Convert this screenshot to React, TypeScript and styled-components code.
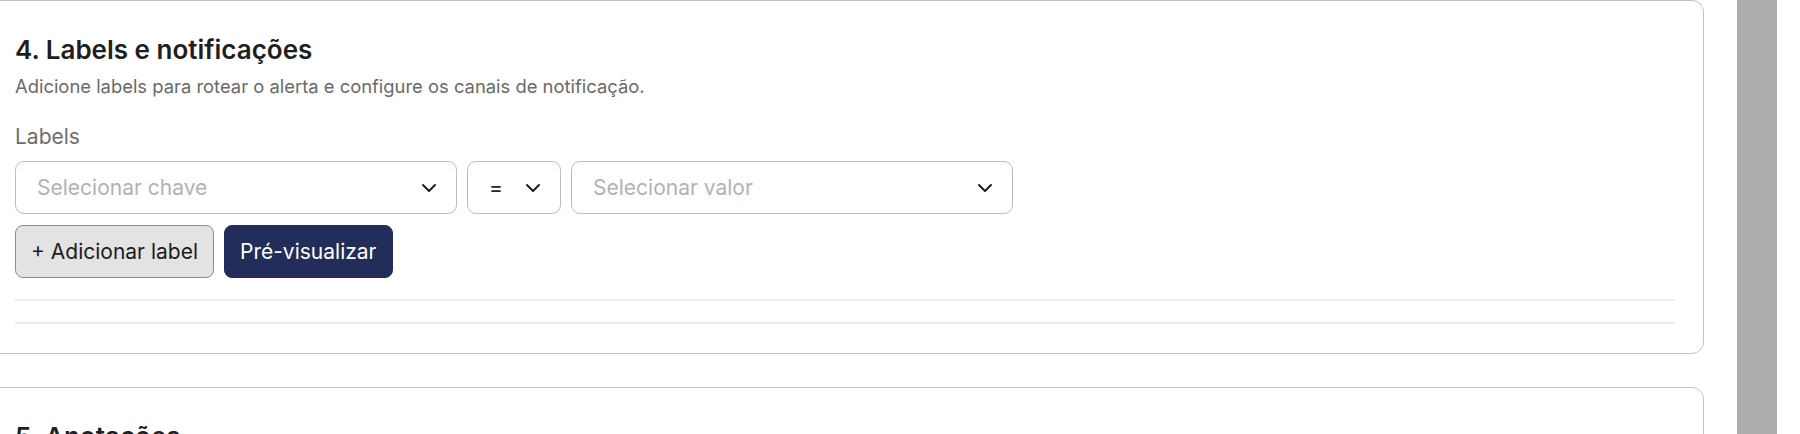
import React from 'react';
import styled, { createGlobalStyle } from 'styled-components';
import { ChevronDown } from 'lucide-react';

const GlobalStyle = createGlobalStyle`
  html, body {
    margin: 0;
    padding: 0;
    height: 434px;
    overflow: hidden;
    background: #ffffff;
    font-family: Inter, 'Noto Sans', sans-serif;
  }
`;

interface SelectProps {
  value: string;
  placeholder?: boolean;
  width: number;
}

const SelectBox = ({ value, placeholder, width }: SelectProps) => (
  <Select width={width}>
    <SelectText placeholder={placeholder}>{value}</SelectText>
    <ChevronDown size={24} strokeWidth={2} color="#1f1f1f" />
  </Select>
);

const App = () => {
  return (
    <>
      <GlobalStyle />
      <Page>
        <Main>
          <Card>
            <Title>4. Labels e notificações</Title>
            <Subtitle>
              Adicione labels para rotear o alerta e configure os canais de notificação.
            </Subtitle>
            <FieldLabel>Labels</FieldLabel>
            <SelectRow>
              <SelectBox value="Selecionar chave" placeholder width={442} />
              <SelectBox value="=" width={94} />
              <SelectBox value="Selecionar valor" placeholder width={442} />
            </SelectRow>
            <ButtonRow>
              <Button>+ Adicionar label</Button>
              <Button primary>Pré-visualizar</Button>
            </ButtonRow>
            <Divider />
            <Divider />
          </Card>
          <Card>
            <Title>5. Anotações</Title>
            <Subtitle>Adicione anotações para descrever o alerta.</Subtitle>
          </Card>
        </Main>
        <Rail />
      </Page>
    </>
  );
};

export default App;

const Page = styled.div`
  display: flex;
  flex-direction: row;
  align-items: flex-start;
  height: 434px;
  padding-right: 23px;
`;

const Main = styled.div`
  flex: 1;
  display: flex;
  flex-direction: column;
  gap: 33px;
  margin-left: -14px;
  min-width: 0;
`;

const Rail = styled.div`
  align-self: stretch;
  width: 40px;
  margin-left: 33px;
  background-color: #adadad;
`;

const Card = styled.section`
  border: 1px solid #c2c2c2;
  border-radius: 12px;
  padding: 33px 28px 29px;
  background-color: #ffffff;
`;

const Title = styled.h2`
  margin: 0 0 7px;
  font-size: 26px;
  line-height: 32px;
  font-weight: 600;
  color: #1e1e1e;
`;

const Subtitle = styled.p`
  margin: 0 0 23px;
  font-size: 18.4px;
  line-height: 27px;
  color: #6a6a6a;
`;

const FieldLabel = styled.div`
  font-size: 21px;
  line-height: 28px;
  color: #6e6e6e;
  margin-bottom: 10px;
`;

const SelectRow = styled.div`
  display: flex;
  flex-direction: row;
  gap: 10px;
`;

const Select = styled.div<{ width: number }>`
  box-sizing: border-box;
  display: flex;
  flex-direction: row;
  align-items: center;
  justify-content: space-between;
  width: ${({ width }) => width + 'px'};
  height: 53px;
  padding: 0 15px 0 21px;
  border: 1px solid #bdbdbd;
  border-radius: 9px;
  background-color: #ffffff;
`;

const SelectText = styled.span<{ placeholder?: boolean }>`
  font-size: 21px;
  color: ${({ placeholder }) => (placeholder ? '#b2b2b2' : '#222222')};
`;

const ButtonRow = styled.div`
  display: flex;
  flex-direction: row;
  gap: 10px;
  margin-top: 11px;
`;

const Button = styled.button<{ primary?: boolean }>`
  box-sizing: border-box;
  height: 53px;
  padding: 0 15px;
  border-radius: 8px;
  font-family: Inter, 'Noto Sans', sans-serif;
  font-size: 21px;
  border: 1px solid ${({ primary }) => (primary ? '#222d59' : '#8c8c8c')};
  background-color: ${({ primary }) => (primary ? '#222d59' : '#e3e3e3')};
  color: ${({ primary }) => (primary ? '#ffffff' : '#1c1c1c')};
`;

const Divider = styled.div`
  height: 2px;
  background-color: #ececec;
  margin-top: 21px;
`;
